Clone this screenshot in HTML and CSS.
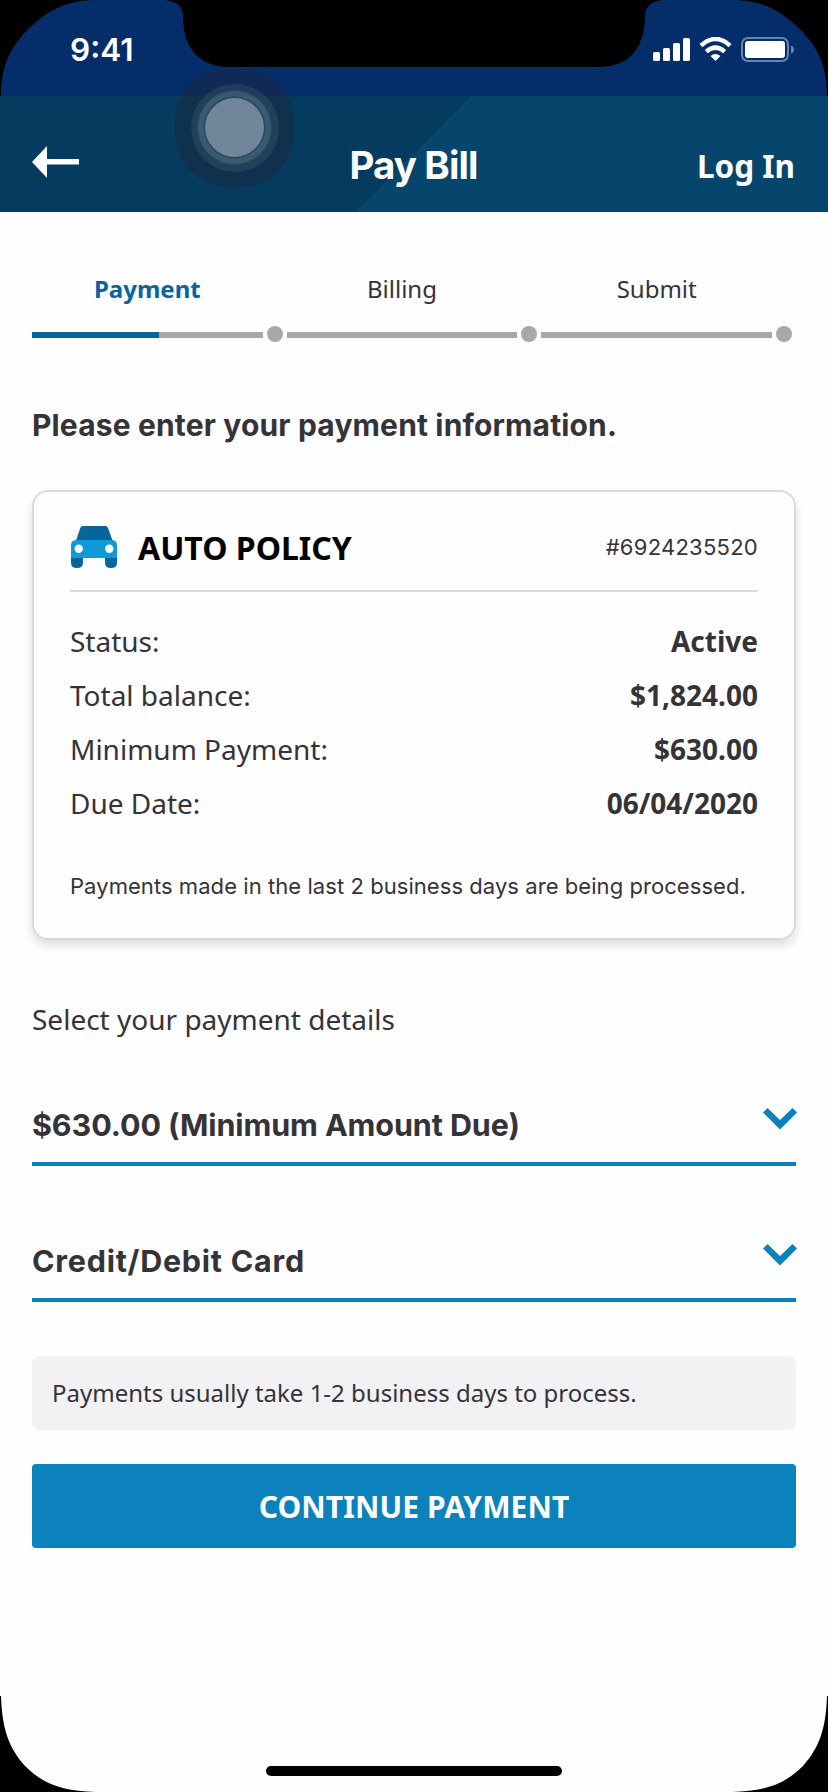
FILE: index.html
```html
<!DOCTYPE html>
<html lang="en">
<head>
<meta charset="utf-8">
<title>Pay Bill</title>
<link rel="stylesheet" href="styles.css">
</head>
<body>
<div class="phone">
  <div class="status-bar">
    <span class="time">9:41</span>
    <svg class="status-icons" width="142" height="26" viewBox="0 0 142 26">
      <g fill="#fff">
        <rect x="0" y="15" width="7" height="9" rx="1.5"/>
        <rect x="10" y="11" width="7" height="13" rx="1.5"/>
        <rect x="20" y="6" width="7" height="18" rx="1.5"/>
        <rect x="30" y="1" width="7" height="23" rx="1.5"/>
        <rect x="92" y="4" width="40" height="17" rx="3"/>
        <path d="M62.5 24l-5-5q5-4 10 0z"/>
      </g>
      <g fill="none" stroke="#fff" stroke-width="4.4">
        <path d="M48 8.6Q62.500-4.600 77 8.600"/>
        <path d="M53.300 14.600Q62.500 6.600 71.700 14.600"/>
      </g>
      <rect x="89" y="1" width="46" height="23" rx="6" fill="none" stroke="#6983ac" stroke-width="2"/>
      <path d="M138 8.500q3 1 3 4t-3 4z" fill="#6983ac"/>
    </svg>
  </div>
  <header class="header">
    <svg class="back" width="47" height="32" viewBox="0 0 47 32"><path d="M0 16L15 0V13H47V18.500H15V32Z" fill="#fff"/></svg>
    <h1 class="title">Pay Bill</h1>
    <span class="login">Log In</span>
  </header>
  <main class="content">
    <div class="steps">
      <div class="step"><span class="step-label current">Payment</span><div class="track"><i class="line"><i class="progress"></i></i><i class="dot"></i></div></div>
      <div class="step"><span class="step-label">Billing</span><div class="track"><i class="line"></i><i class="dot"></i></div></div>
      <div class="step"><span class="step-label">Submit</span><div class="track"><i class="line"></i><i class="dot"></i></div></div>
    </div>
    <h2 class="prompt">Please enter your payment information.</h2>
    <section class="card">
      <div class="card-head">
        <svg class="car" width="46" height="42" viewBox="0 0 46 42">
          <path d="M0 29H12V36.500Q12 42 6 42T0 36.500ZM34 29H46V36.500Q46 42 40 42T34 36.500Z" fill="#07659c"/>
          <path d="M5 14.500L9.300 2Q10 0 12 0H34.500Q36.300 0 37 2L41.500 14.500Z" fill="#07659c"/>
          <path d="M5 14H41Q46 14.500 46 19V32H0V19Q0 14.500 5 14Z" fill="#0e9ad8"/>
          <circle cx="7.700" cy="22.700" r="4.200" fill="#fff"/><circle cx="38.300" cy="22.700" r="4.200" fill="#fff"/>
        </svg>
        <span class="policy">AUTO POLICY</span>
        <span class="number">#6924235520</span>
      </div>
      <dl class="rows">
        <div class="row"><dt>Status:</dt><dd>Active</dd></div>
        <div class="row"><dt>Total balance:</dt><dd>$1,824.00</dd></div>
        <div class="row"><dt>Minimum Payment:</dt><dd>$630.00</dd></div>
        <div class="row"><dt>Due Date:</dt><dd>06/04/2020</dd></div>
      </dl>
      <p class="card-note">Payments made in the last 2 business days are being processed.</p>
    </section>
    <p class="details">Select your payment details</p>
    <div class="select"><span class="amount">$630.00 (Minimum Amount Due)</span>
      <svg class="chevron" width="34" height="22" viewBox="0 0 34 22"><path d="M0 4.500L4.500 0L17 12L29.500 0L34 4.500L17 21.500Z" fill="#0b82bb"/></svg></div>
    <div class="select"><span class="method">Credit/Debit Card</span>
      <svg class="chevron" width="34" height="22" viewBox="0 0 34 22"><path d="M0 4.500L4.500 0L17 12L29.500 0L34 4.500L17 21.500Z" fill="#0b82bb"/></svg></div>
    <div class="notice"><span>Payments usually take 1-2 business days to process.</span></div>
    <button class="continue"><span>CONTINUE PAYMENT</span></button>
  </main>
  <div class="home-bar"></div>
  <div class="touch"><i class="ring outer"></i><i class="ring middle"></i><i class="ring inner"></i></div>
  <svg class="bezel" width="828" height="1792" viewBox="0 0 828 1792">
    <path d="M0 0H96C64 0 47 13 36 22C10 44 1 66 1 96H0Z"/>
    <path d="M828 0H732C764 0 781 13 792 22C818 44 827 66 827 96H828Z"/>
    <path d="M0 1696H1C2 1729 9 1748 25 1766C43 1784 62 1791 96 1792H0Z"/>
    <path d="M828 1696H827C826 1729 819 1748 803 1766C785 1784 766 1791 732 1792H828Z"/>
    <path d="M166 0C178 2 183 7 183 17C183 44 196 66 227 67H601C632 66 645 44 645 17C645 7 650 2 662 0Z"/>
  </svg>
</div>
</body>
</html>
```
FILE: styles.css
```css
* { box-sizing: border-box; }
body { margin: 0; background: #fefdff; }
h1, h2, p, dl, dd { margin: 0; }
i { display: block; }
svg { display: block; flex: none; }
.phone {
  position: relative;
  display: flex;
  flex-direction: column;
  width: 828px;
  height: 1792px;
  overflow: hidden;
  background: #fefdff;
  color: #353337;
  font-family: "Noto Sans", sans-serif;
  white-space: nowrap;
}
.status-bar {
  display: flex;
  justify-content: space-between;
  height: 96px;
  padding: 30px 33px 0 70px;
  background: #052d6a;
  color: #fff;
}
.time { font: 600 31.500px/40px Inter, sans-serif; }
.status-icons { margin-top: 7px; }
.header {
  position: relative;
  display: grid;
  grid-template-columns: 1fr auto 1fr;
  height: 116px;
  padding: 0 33px 0 32px;
  background: #07466c;
  color: #fff;
}
.header::before {
  content: "";
  position: absolute;
  inset: 0;
  background: #053b5e;
  clip-path: polygon(0 0, 471px 0, 356px 100%, 0 100%);
}
.header > * { position: relative; }
.back { margin-top: 50px; }
.title { margin-top: 44px; font: 700 38.500px/50px Inter, sans-serif; letter-spacing: -.9px; }
.login { justify-self: end; margin-top: 48px; font-weight: 700; font-size: 31.500px; line-height: 44px; }
.content { display: flex; flex-direction: column; padding: 60px 32px 0; }
.steps { display: grid; grid-template-columns: repeat(3, 1fr); }
.step-label {
  display: block;
  padding-right: 24px;
  font-size: 24px;
  line-height: 34px;
  text-align: center;
}
.step-label.current { color: #07659c; font-weight: 700; }
.track { display: flex; align-items: center; height: 16px; margin-top: 20px; }
.line { flex: 1; height: 6px; margin-top: 2px; background: #a8a7aa; }
.progress { width: 127px; height: 6px; background: #07659c; }
.dot { width: 16px; height: 16px; margin: 0 4px; border-radius: 50%; background: #a8a7aa; }
.prompt { margin-top: 63px; font: 700 30px/40px Inter, sans-serif; letter-spacing: .15px; }
.card {
  height: 450px;
  margin-top: 45px;
  padding: 0 36px;
  border: 2px solid #dadad9;
  border-radius: 16px;
  box-shadow: 0 6px 10px rgba(0, 0, 0, .12);
}
.card-head {
  display: flex;
  align-items: center;
  height: 100px;
  padding-left: 1px;
  border-bottom: 2px solid #dadad9;
}
.car { margin-top: 12px; }
.policy { margin: 14px auto 0 21px; color: #000; font-weight: 700; font-size: 32px; line-height: 44px; }
.number { margin: 11px 0 0; font: 400 22px/30px Inter, sans-serif; letter-spacing: .25px; }
.rows { padding-top: 22px; font-size: 28px; }
.row { display: flex; justify-content: space-between; line-height: 54px; }
.row dd { font-weight: 700; }
.card-note { margin-top: 39px; font: 400 22px/34px Inter, sans-serif; letter-spacing: .06px; }
.details { margin-top: 59px; font-size: 28px; line-height: 40px; }
.select {
  display: flex;
  justify-content: space-between;
  height: 86px;
  margin-top: 50px;
  border-bottom: 4px solid #0b82bb;
  font: 700 30.500px/40px Inter, sans-serif;
}
.details + .select { margin-top: 41px; }
.select span { margin-top: 25px; }
.amount { letter-spacing: -.1px; }
.method { letter-spacing: .75px; }
.chevron { margin: 28px -1px 0 0; }
.notice {
  height: 74px;
  margin-top: 54px;
  padding-left: 20px;
  border-radius: 8px;
  background: #f2f1f4;
  font-size: 24px;
  line-height: 74px;
}
.continue {
  height: 84px;
  margin-top: 34px;
  padding: 0;
  border: 0;
  border-radius: 4px;
  background: #0b82bb;
  color: #fff;
  font: 700 30px/86px "Noto Sans", sans-serif;
  letter-spacing: .1px;
}
.home-bar { width: 296px; height: 10px; margin: auto auto 16px; border-radius: 5px; background: #000; }
.touch {
  position: absolute;
  left: 175px;
  top: 68px;
  width: 119px;
  height: 119px;
  border-radius: 54px;
  background: rgba(28, 39, 60, .48);
}
.ring { position: absolute; border-radius: 50%; }
.outer { inset: 15.500px; background: rgba(255, 255, 255, .08); }
.middle { inset: 22px; background: rgba(255, 255, 255, .13); border: 1px solid #244964; }
.inner { inset: 30px; background: #71869a; box-shadow: 0 0 0 1.500px #244964; }
.bezel { position: absolute; inset: 0; fill: #000; }
```
